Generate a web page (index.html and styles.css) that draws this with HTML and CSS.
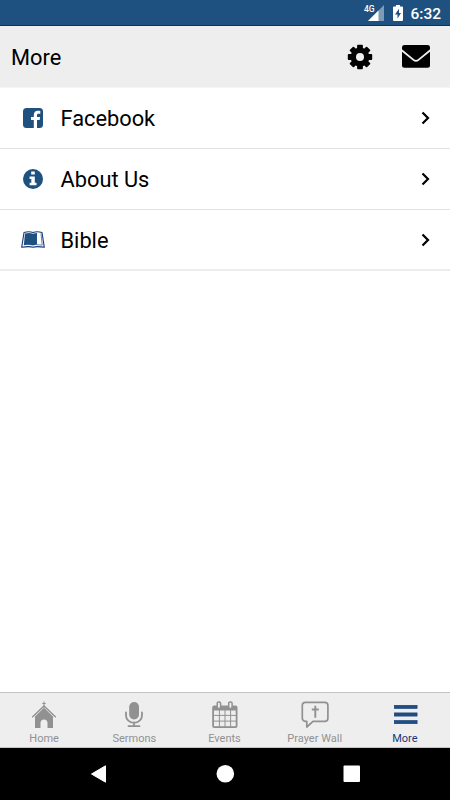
FILE: index.html
```
<!DOCTYPE html>
<html lang="en">
<head>
  <meta charset="UTF-8" />
  <meta name="viewport" content="width=device-width, initial-scale=1.0"/>
  <title>More</title>
  <link rel="stylesheet" href="styles.css">
</head>
<body>

  <!-- Status bar -->
  <div class="status-bar">
    <svg class="signal" width="20" height="18" viewBox="0 0 20 18">
      <path d="M20 1V17H4z" fill="#7d9bb7"/>
      <path d="M14.500 6.500V17H4z" fill="#fff"/>
      <text x="0" y="8.300">4G</text>
    </svg>
    <svg class="battery" width="10" height="16" viewBox="0 0 10 16">
      <path d="M3 0h4v1.600h2a1 1 0 0 1 1 1V15a1 1 0 0 1-1 1H1a1 1 0 0 1-1-1V2.600a1 1 0 0 1 1-1h2z" fill="#fff"/>
      <path d="M6 3.800L2 9.500h2.500v4L8 8H6z" fill="#1e517f"/>
    </svg>
    <span class="time">6:32</span>
  </div>

  <!-- Header -->
  <header class="header">
    <h1>More</h1>
    <button class="icon-btn gear">
      <svg width="26" height="26" viewBox="-13 -13 26 26">
        <rect x="-2.900" y="-12.200" width="5.800" height="24.400" rx="0.900"/>
        <rect x="-2.900" y="-12.200" width="5.800" height="24.400" rx="0.900" transform="rotate(45)"/>
        <rect x="-2.900" y="-12.200" width="5.800" height="24.400" rx="0.900" transform="rotate(90)"/>
        <rect x="-2.900" y="-12.200" width="5.800" height="24.400" rx="0.900" transform="rotate(135)"/>
        <circle r="9.400"/>
        <circle r="4" fill="#eee"/>
      </svg>
    </button>
    <button class="icon-btn mail">
      <svg width="28" height="23" viewBox="0 0 28 23">
        <rect width="28" height="22.700" rx="2.500"/>
        <path d="M-1 4.700L11.500 14.900Q14 16.900 16.500 14.900L29 4.700" fill="none" stroke="#eee" stroke-width="1.800"/>
      </svg>
    </button>
  </header>

  <!-- Menu list -->
  <main class="menu">
    <a class="menu-item">
      <span class="menu-icon">
        <svg width="20" height="20" viewBox="0 0 20 20">
          <rect width="20" height="20" rx="3.500" fill="#1e517f"/>
          <path d="M10.800 20V12H8V9h2.800V7c0-2.700 1.600-4.200 4.100-4.200 1.100 0 2.100.1 2.400.2v2.800h-1.700c-1.300 0-1.600.6-1.600 1.600V9h3.100l-.4 3H14v8z" fill="#fff"/>
        </svg>
      </span>
      <span class="menu-label">Facebook</span>
      <svg class="chevron" width="10" height="14" viewBox="0 0 10 14"><path d="M1.500 1.500L7 7l-5.500 5.500"/></svg>
    </a>
    <a class="menu-item">
      <span class="menu-icon">
        <svg width="20" height="20" viewBox="0 0 20 20">
          <circle cx="10" cy="10" r="10" fill="#1e517f"/>
          <path d="M8.200 2.600h3.600v2.900H8.200zM6.600 7.500h5.200v6.300h1.700v2.500H6.600v-2.500h1.700V10H6.600z" fill="#fff"/>
        </svg>
      </span>
      <span class="menu-label">About Us</span>
      <svg class="chevron" width="10" height="14" viewBox="0 0 10 14"><path d="M1.500 1.500L7 7l-5.500 5.500"/></svg>
    </a>
    <a class="menu-item">
      <span class="menu-icon">
        <svg width="24" height="18" viewBox="0 0 24 18">
          <path d="M3 1.500Q8 0 12 1.500Q16 0 21 1.500L23.300 16.300Q15.500 15 12 16.300Q8.500 15 .7 16.300z" fill="#fff" stroke="#17397c" stroke-width="1.100" stroke-linejoin="round"/>
          <path d="M4 2.600Q8.300 1.400 12 2.700Q14 2 16 2V13.800Q14 13.700 12 14.500Q7.500 13.300 2.800 14.200z" fill="#1e517f"/>
          <path d="M20 2.500L21.200 14.200Q18.500 13.600 16 13.800" fill="none" stroke="#1e517f" stroke-width=".7"/>
        </svg>
      </span>
      <span class="menu-label">Bible</span>
      <svg class="chevron" width="10" height="14" viewBox="0 0 10 14"><path d="M1.500 1.500L7 7l-5.500 5.500"/></svg>
    </a>
  </main>

  <!-- Bottom tabs -->
  <nav class="tabs">
    <a class="tab">
      <svg width="28" height="28" viewBox="0 0 28 28">
        <path d="M14 .5V7M12.300 2.500h3.400" fill="none" stroke="#919191" stroke-width="1"/>
        <path d="M2.200 16.200L14 4.900l11.800 11.300" fill="none" stroke="#919191" stroke-width="1.400"/>
        <path d="M14 6.800l9 8.600V27h-5.500v-5a3.500 3.500 0 0 0-7 0V27H5V15.400z" fill="#919191"/>
      </svg>
      <span>Home</span>
    </a>
    <a class="tab">
      <svg width="28" height="28" viewBox="0 0 28 28">
        <rect x="9.200" y="1" width="9.800" height="17.500" rx="4.800" fill="#919191"/>
        <path d="M6 11.300v3.200a8 7.300 0 0 0 16 0v-3.200M14 21.500V25M8.500 25.100h11" fill="none" stroke="#919191" stroke-width="1.800" stroke-linecap="round"/>
      </svg>
      <span>Sermons</span>
    </a>
    <a class="tab">
      <svg width="28" height="28" viewBox="0 0 28 28">
        <path d="M3.200 4.500h21.300a2 2 0 0 1 2 2V25a2 2 0 0 1-2 2H3.200a2 2 0 0 1-2-2V6.500a2 2 0 0 1 2-2z" fill="#919191"/>
        <g fill="#eee">
          <rect x="3" y="9.500" width="4.900" height="4.400"/><rect x="8.900" y="9.500" width="4.600" height="4.400"/><rect x="14.500" y="9.500" width="4.600" height="4.400"/><rect x="20.100" y="9.500" width="4.600" height="4.400"/>
          <rect x="3" y="14.900" width="4.900" height="4.700"/><rect x="8.900" y="14.900" width="4.600" height="4.700"/><rect x="14.500" y="14.900" width="4.600" height="4.700"/><rect x="20.100" y="14.900" width="4.600" height="4.700"/>
          <rect x="3" y="20.600" width="4.900" height="4.600"/><rect x="8.900" y="20.600" width="4.600" height="4.600"/><rect x="14.500" y="20.600" width="4.600" height="4.600"/><rect x="20.100" y="20.600" width="4.600" height="4.600"/>
        </g>
        <g fill="#eee" stroke="#919191" stroke-width="1.500">
          <rect x="6.200" y=".9" width="3.400" height="6.500" rx="1.400"/>
          <rect x="17.700" y=".9" width="3.400" height="6.500" rx="1.400"/>
        </g>
      </svg>
      <span>Events</span>
    </a>
    <a class="tab">
      <svg width="28" height="28" viewBox="0 0 28 28">
        <path d="M4.500 1.300h19.200a3.200 3.200 0 0 1 3.200 3.200v12.700a3.200 3.200 0 0 1-3.200 3.200H12L5.800 26V20.400H4.500a3.200 3.200 0 0 1-3.200-3.200V4.500a3.200 3.200 0 0 1 3.200-3.200z" fill="none" stroke="#919191" stroke-width="1.700" stroke-linejoin="round"/>
        <path d="M14.300 4.800v12M10.800 8.500h7" fill="none" stroke="#919191" stroke-width="1.900"/>
      </svg>
      <span>Prayer Wall</span>
    </a>
    <a class="tab active">
      <svg width="28" height="28" viewBox="0 0 28 28">
        <g fill="#1e517f" stroke="#153c7c" stroke-width=".6">
          <rect x="3.300" y="4.300" width="22.800" height="3.200"/>
          <rect x="3.300" y="11.900" width="22.800" height="3.200"/>
          <rect x="3.300" y="19.500" width="22.800" height="3.200"/>
        </g>
      </svg>
      <span>More</span>
    </a>
  </nav>

  <!-- Android navigation -->
  <div class="nav-bar">
    <svg width="18" height="20" viewBox="0 0 18 20"><path d="M1.500 10L15.500 1.800V18.200z" fill="#fff" stroke="#fff" stroke-linejoin="round"/></svg>
    <svg width="18" height="20" viewBox="0 0 18 20"><circle cx="8.300" cy="9.700" r="8.800" fill="#fff"/></svg>
    <svg width="18" height="20" viewBox="0 0 18 20"><rect x=".5" y="1.500" width="16.500" height="16.500" rx="1" fill="#fff"/></svg>
  </div>

</body>
</html>
```
FILE: styles.css
```
* {
  box-sizing: border-box;
}

body {
  margin: 0;
  font-family: Roboto, sans-serif;
  background: #fff;
  color: #000;
  display: flex;
  flex-direction: column;
  height: 100vh;
}

svg {
  display: block;
  flex-shrink: 0;
  overflow: visible;
}

.mail svg {
  overflow: hidden;
}

.status-bar {
  height: 26px;
  background: #1e517f;
  border-bottom: 1px solid #04326b;
  display: flex;
  align-items: center;
  justify-content: flex-end;
  padding-right: 9px;
  color: #fff;
}

.signal text {
  font-size: 8.5px;
  font-weight: 500;
  fill: #fff;
}

.battery {
  margin: 1px 7px 0 9px;
}

.time {
  font-size: 15.5px;
  font-weight: 500;
  line-height: 18px;
  margin-top: 3px;
}

.header {
  height: 61px;
  background: #eee;
  display: flex;
  align-items: center;
  padding: 0 20px 0 11px;
}

h1 {
  margin: 2px auto 0 0;
  font-size: 21.8px;
  font-weight: 400;
}

.icon-btn {
  background: none;
  border: none;
  padding: 0;
}

.mail {
  margin-left: 29px;
}

.menu {
  flex: 1;
  border-top: 1px solid #f5f5f5;
}

.menu-item {
  display: flex;
  align-items: center;
  height: 61px;
  padding: 0 19px 0 21px;
  border-bottom: 1px solid #e2e2e2;
}

.menu-item:last-child {
  height: 61px;
  border-bottom: 2px solid #ececec;
}

.menu-icon {
  width: 24px;
  display: flex;
  justify-content: center;
}

.menu-label {
  flex: 1;
  margin: 1px 0 0 15.5px;
  font-size: 21.8px;
}

.chevron path {
  fill: none;
  stroke: #000;
  stroke-width: 2.2;
}

.tabs {
  height: 56px;
  background: #eee;
  border-top: 1px solid #c4c4c4;
  border-bottom: 1px solid #c4c4c4;
  display: flex;
}

.tab {
  flex: 1;
  display: flex;
  flex-direction: column;
  align-items: center;
  padding-top: 8px;
  font-size: 11px;
  line-height: 13px;
  color: #919191;
}

.tab:first-child {
  margin-left: -1px;
}

.tab span {
  margin-top: 3px;
}

.tab.active {
  color: #17397c;
}

.nav-bar {
  height: 52px;
  background: #000;
  display: flex;
  align-items: center;
  justify-content: space-between;
  padding: 0 89px 0 90px;
}
```
